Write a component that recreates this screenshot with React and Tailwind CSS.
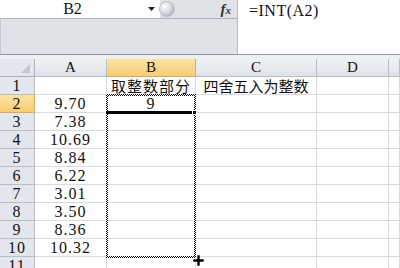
const serif = "font-['Liberation_Serif','Noto_Sans_CJK_SC',serif]";

const cols = ['A', 'B', 'C', 'D', ''];

const data = [
  ['', '取整数部分', '四舍五入为整数'],
  ['9.70', '9', ''],
  ['7.38'],
  ['10.69'],
  ['8.84'],
  ['6.22'],
  ['3.01'],
  ['3.50'],
  ['8.36'],
  ['10.32'],
  [''],
];

function Ants({ className }) {
  return (
    <div
      className={`absolute bg-[repeating-conic-gradient(#000_0_25%,#fff_0_50%)] bg-[length:2px_2px] ${className}`}
    />
  );
}

export default function App() {
  return (
    <div className={`w-[400px] h-[268px] overflow-hidden bg-white text-[#111] ${serif}`}>
      {/* formula bar */}
      <div className="flex h-[55px] border-b border-[#8f9aa8]">
        <div className="w-[238px] flex flex-col border-r border-[#b4bcc6] bg-[#dfe3e8]">
          <div className="flex h-[19px] items-center border-b border-[#aeb6c0]">
            <div className="w-[160px] h-full bg-white flex items-center">
              <span className="w-[145px] text-center text-[16px] leading-none">B2</span>
              <svg width="7" height="4" viewBox="0 0 7 4" className="ml-[3px]">
                <path d="M0 0h7L3.5 4z" fill="#222" />
              </svg>
            </div>
            <svg width="17" height="18" viewBox="0 0 17 18" className="-ml-[2px]">
              <defs>
                <radialGradient id="g" cx="0.35" cy="0.35" r="0.7">
                  <stop offset="0" stopColor="#ffffff" />
                  <stop offset="0.6" stopColor="#d5d9de" />
                  <stop offset="1" stopColor="#aab1b9" />
                </radialGradient>
              </defs>
              <circle cx="9" cy="9" r="7.5" fill="url(#g)" stroke="#b9c0c8" />
            </svg>
            <div className="flex-1 flex justify-end pr-[6px]">
              <span className="italic font-bold text-[15px] leading-none text-[#333]">
                f<span className="text-[11px]">x</span>
              </span>
            </div>
          </div>
          <div className="flex-1 border-l border-[#c3c9d1]" />
        </div>
        <div className="flex-1 bg-white pl-[11px] pt-[3px] text-[16px] leading-[16px] tracking-[0.5px]">
          =INT(A2)
        </div>
      </div>
      <div className="h-[4px] bg-[#eef0f3]" />

      {/* sheet */}
      <div className="relative h-[209px] overflow-hidden">
        <div className="grid grid-cols-[35px_72px_89px_121px_72px_1fr] auto-rows-[18px]">
          <div className="relative bg-[#e3e7ed] border-r border-b border-[#a9b3bf]">
            <svg width="9" height="9" viewBox="0 0 9 9" className="absolute right-[4px] bottom-[3px]">
              <path d="M9 0V9H0z" fill="#c2c7ce" />
            </svg>
          </div>
          {cols.map((c, i) => (
            <div
              key={i}
              className={`flex items-center justify-center text-[15px] leading-none border-r border-b ${
                c === 'B'
                  ? 'bg-[linear-gradient(#fbe3a6,#f6cd73)] border-[#e2a94a]'
                  : 'bg-[linear-gradient(#eef1f5,#dfe3e9)] border-[#b5bdc8]'
              }`}
            >
              {c}
            </div>
          ))}
          {data.map((r, ri) => (
            <>
              <div
                key={`h${ri}`}
                className={`flex items-center justify-center text-[16px] leading-none tracking-[1px] border-r border-b ${
                  ri === 1
                    ? 'bg-[linear-gradient(#fbe3a6,#f6cd73)] border-[#e2a94a]'
                    : 'bg-[#e3e7ed] border-[#b5bdc8]'
                }`}
              >
                {ri + 1}
              </div>
              {[0, 1, 2, 3, 4].map((ci) => {
                const v = r[ci] || '';
                const cjk = /[\u4e00-\u9fff]/.test(v);
                return (
                  <div
                    key={`${ri}-${ci}`}
                    className={`flex items-center justify-center whitespace-nowrap leading-none border-r border-b border-[#d9dbde] ${
                      cjk
                        ? ci === 1
                          ? "text-[15px] tracking-[1px] font-['Noto_Sans_CJK_SC',sans-serif]"
                          : "text-[15px] font-['Noto_Sans_CJK_SC',sans-serif]"
                        : 'text-[16px] tracking-[1px]'
                    }`}
                  >
                    {v}
                  </div>
                );
              })}
            </>
          ))}
        </div>

        {/* copy marquee around B2:B10 */}
        <Ants className="left-[106px] top-[35px] w-[90px] h-[2px]" />
        <Ants className="left-[106px] top-[197px] w-[90px] h-[2px]" />
        <Ants className="left-[106px] top-[35px] w-[2px] h-[164px]" />
        <Ants className="left-[194px] top-[35px] w-[2px] h-[164px]" />

        {/* active cell bottom edge + fill handle */}
        <div className="absolute left-[106px] top-[52px] w-[87px] h-[3px] bg-black" />
        <div className="absolute left-[192px] top-[51px] w-[5px] h-[5px] bg-black border border-white" />

        {/* cursor */}
        <svg width="11" height="11" viewBox="0 0 11 11" className="absolute left-[193px] top-[196px]">
          <path d="M4 0h3v4h4v3H7v4H4V7H0V4h4z" fill="#000" stroke="#fff" strokeWidth="0.6" />
        </svg>
      </div>
    </div>
  );
}
